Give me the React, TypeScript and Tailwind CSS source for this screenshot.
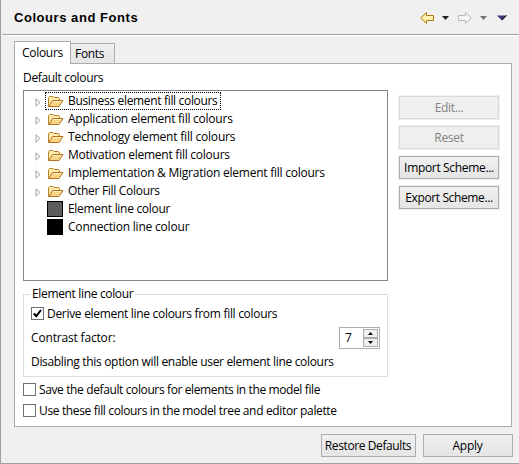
import React from "react";

type TextProps = { className?: string; children: React.ReactNode };

function Text({ className = "", children }: TextProps) {
  return <span className={`block whitespace-nowrap leading-4 ${className}`}>{children}</span>;
}

function Folder() {
  return (
    <svg width="16" height="12" viewBox="0 0 16 12" className="mt-px shrink-0">
      <path d="M0.5 10.5V1.5L1.5 0.5H5L6 1.5H10L11.5 2.5V4.5" fill="#ffeab0" stroke="#b98226" />
      <path d="M0.8 10.5L4.5 4.5H15L11 10.5Z" fill="#fad68a" stroke="#b0701c" strokeLinejoin="round" />
      <path d="M5 5.5H13.3" stroke="#fff0c4" />
    </svg>
  );
}

function Expander() {
  return (
    <svg width="7" height="9" viewBox="0 0 7 9" className="mt-[2px] shrink-0">
      <path d="M1 0.8V8.2L5 4.5Z" fill="#fff" stroke="#a0a0a0" />
    </svg>
  );
}

const folders = [
  { label: "Business element fill colours", cls: "w-[149px] tracking-[-0.33px]" },
  { label: "Application element fill colours", cls: "w-[165px] tracking-[-0.24px]" },
  { label: "Technology element fill colours", cls: "w-[167px] tracking-[-0.2px]" },
  { label: "Motivation element fill colours", cls: "w-[162px] tracking-[-0.25px]" },
  { label: "Implementation & Migration element fill colours", cls: "w-[257px] tracking-[-0.24px]" },
  { label: "Other Fill Colours", cls: "w-[92px] tracking-[-0.3px]" },
];

function FolderRow({ label, cls, focused }: { label: string; cls: string; focused: boolean }) {
  return (
    <div className="flex h-[18px] items-center pl-[11px]">
      <Expander />
      <div className={`ml-[3px] flex h-[18px] items-center border border-dotted pl-[2px] pr-[3px] ${focused ? "border-black" : "border-transparent"}`}>
        <Folder />
        <Text className={`ml-1 ${cls}`}>{label}</Text>
      </div>
    </div>
  );
}

function SwatchRow({ label, cls, fill }: { label: string; cls: string; fill: string }) {
  return (
    <div className="flex h-[18px] items-center pl-[23px]">
      <div className={`size-4 border border-black ${fill}`} />
      <Text className={`ml-[5px] ${cls}`}>{label}</Text>
    </div>
  );
}

function SideButton({ label, cls, disabled }: { label: string; cls: string; disabled?: boolean }) {
  return (
    <div className="h-[25px] w-[102px] border border-[#f0f0f0]">
      <button
        className={`flex h-[23px] w-[100px] items-center justify-center border ${
          disabled ? "border-[#d9d9d9] bg-[#efefef] text-[#838383]" : "border-[#acacac] bg-linear-to-b from-[#f0f0f0] to-[#e5e5e5]"
        }`}
      >
        <Text className={cls}>{label}</Text>
      </button>
    </div>
  );
}

function Check({ checked, label, cls }: { checked?: boolean; label: string; cls: string }) {
  return (
    <label className="flex h-[13px] items-center gap-1">
      <span className="flex size-[13px] shrink-0 items-center justify-center border border-[#707070] bg-white">
        {checked && (
          <svg width="9" height="9" viewBox="0 0 9 9">
            <path d="M0.8 4.5L3.3 7.2L8 1" fill="none" stroke="#000" strokeWidth="2" />
          </svg>
        )}
      </span>
      <Text className={cls}>{label}</Text>
    </label>
  );
}

function Caret({ color, wide }: { color: string; wide?: boolean }) {
  return wide ? (
    <svg width="10" height="6" viewBox="0 0 10 6">
      <path d="M0 0.5H10L5 5.5Z" fill="#3b3670" />
      <path d="M9.5 0.5L5 5" stroke="#111" />
    </svg>
  ) : (
    <svg width="7" height="4" viewBox="0 0 7 4">
      <path d="M0 0H7L3.5 4Z" fill={color} />
    </svg>
  );
}

function BackArrow() {
  return (
    <svg width="14" height="12" viewBox="0 0 14 12">
      <path d="M0.7 6L6.5 0.6V3.5H13.5V8.5H6.5V11.4Z" fill="#fff0b0" stroke="#b47b10" />
    </svg>
  );
}

function ForwardArrow() {
  return (
    <svg width="14" height="12" viewBox="0 0 14 12">
      <path d="M13.3 6L7.5 0.6V3.5H0.5V8.5H7.5V11.4Z" fill="#f5f5f0" stroke="#b9b9b9" />
    </svg>
  );
}

export default function App() {
  return (
    <div className="flex h-[464px] w-[519px] flex-col overflow-hidden border-b border-l border-[#a0a0a0] bg-[#f0f0f0] font-['Open_Sans','Noto_Sans',sans-serif] text-[12px] text-black">
      <header className="ml-px flex h-[36px] shrink-0 items-center border-b border-white shadow-[inset_0_-1px_0_#a0a0a0]">
        <h1 className="ml-3 mt-px w-[378px] whitespace-nowrap font-['Liberation_Sans',sans-serif] text-[13px] font-bold leading-4 tracking-[0.55px]">
          Colours and Fonts
        </h1>
        <div className="ml-7 flex items-center">
          <BackArrow />
          <span className="ml-2"><Caret color="#202020" /></span>
          <span className="ml-[9px]"><ForwardArrow /></span>
          <span className="ml-2"><Caret color="#707078" /></span>
          <span className="ml-[10px]"><Caret color="#2b2566" wide /></span>
        </div>
      </header>

      <nav className="ml-[13px] mt-[5px] flex h-[22px] shrink-0 items-end">
        <div className="z-10 -mb-px flex h-[23px] w-[57px] justify-center border border-b-0 border-[#acacac] bg-white pt-[3px]">
          <Text className="tracking-[-0.3px]">Colours</Text>
        </div>
        <div className="flex h-5 w-[44px] border border-b-0 border-l-0 border-[#acacac] bg-linear-to-b from-[#f0f0f0] to-[#e5e5e5] pl-1 pt-[2px]">
          <Text className="tracking-[-0.3px]">Fonts</Text>
        </div>
      </nav>

      <main className="ml-[13px] h-[364px] w-[498px] shrink-0 border border-[#acacac] bg-white pl-2">
        <Text className="mt-[6px] tracking-[-0.33px]">Default colours</Text>
        <div className="mt-1 flex">
          <div className="h-[191px] w-[365px] border border-[#828790] pt-px">
            {folders.map((f, i) => (
              <FolderRow key={f.label} {...f} focused={i === 0} />
            ))}
            <SwatchRow label="Element line colour" cls="tracking-[-0.3px]" fill="bg-[#5c5c5c]" />
            <SwatchRow label="Connection line colour" cls="tracking-[-0.2px]" fill="bg-black" />
          </div>
          <div className="ml-[10px] mt-[5px] flex flex-col gap-[5px]">
            <SideButton label="Edit..." cls="tracking-[-0.3px]" disabled />
            <SideButton label="Reset" cls="tracking-[-0.3px]" disabled />
            <SideButton label="Import Scheme..." cls="tracking-[-0.33px]" />
            <SideButton label="Export Scheme..." cls="tracking-[-0.38px]" />
          </div>
        </div>

        <fieldset className="mt-[5px] h-[91px] w-[365px] border border-[#dcdcdc] pl-[7px]">
          <legend className="-ml-[1px] px-[2px]"><Text className="tracking-[-0.34px]">Element line colour</Text></legend>
          <div className="mt-[5px]">
            <Check checked label="Derive element line colours from fill colours" cls="-ml-px tracking-[-0.3px]" />
          </div>
          <div className="mt-[7px] flex h-[22px] items-center">
            <Text className="w-[308px] tracking-[-0.17px]">Contrast factor:</Text>
            <div className="flex h-[22px] w-[41px] justify-between border border-[#abadb3] bg-white p-px">
              <Text className="ml-1 mt-px">7</Text>
              <div className="w-[15px]">
                <div className="flex h-[9px] items-center justify-center border border-[#acacac] bg-[#f0f0f0]">
                  <svg width="5" height="3"><path d="M0 3H5L2.5 0Z" /></svg>
                </div>
                <div className="flex h-[9px] items-center justify-center border border-[#acacac] bg-[#f0f0f0]">
                  <svg width="5" height="3"><path d="M0 0H5L2.5 3Z" /></svg>
                </div>
              </div>
            </div>
          </div>
          <Text className="mt-[5px] tracking-[-0.32px]">Disabling this option will enable user element line colours</Text>
        </fieldset>

        <div className="mt-[6px] flex flex-col gap-2">
          <Check label="Save the default colours for elements in the model file" cls="-ml-px tracking-[-0.38px]" />
          <Check label="Use these fill colours in the model tree and editor palette" cls="-ml-px tracking-[-0.35px]" />
        </div>
      </main>

      <footer className="ml-[320px] mt-[7px] flex gap-[7px]">
        <button className="flex h-[23px] w-[95px] items-center justify-center border border-[#acacac] bg-linear-to-b from-[#f0f0f0] to-[#e5e5e5]">
          <Text className="-ml-px tracking-[-0.4px]">Restore Defaults</Text>
        </button>
        <button className="flex h-[23px] w-[90px] items-center justify-center border border-[#acacac] bg-linear-to-b from-[#f0f0f0] to-[#e5e5e5]">
          <Text className="-ml-px tracking-[-0.25px]">Apply</Text>
        </button>
      </footer>
    </div>
  );
}
